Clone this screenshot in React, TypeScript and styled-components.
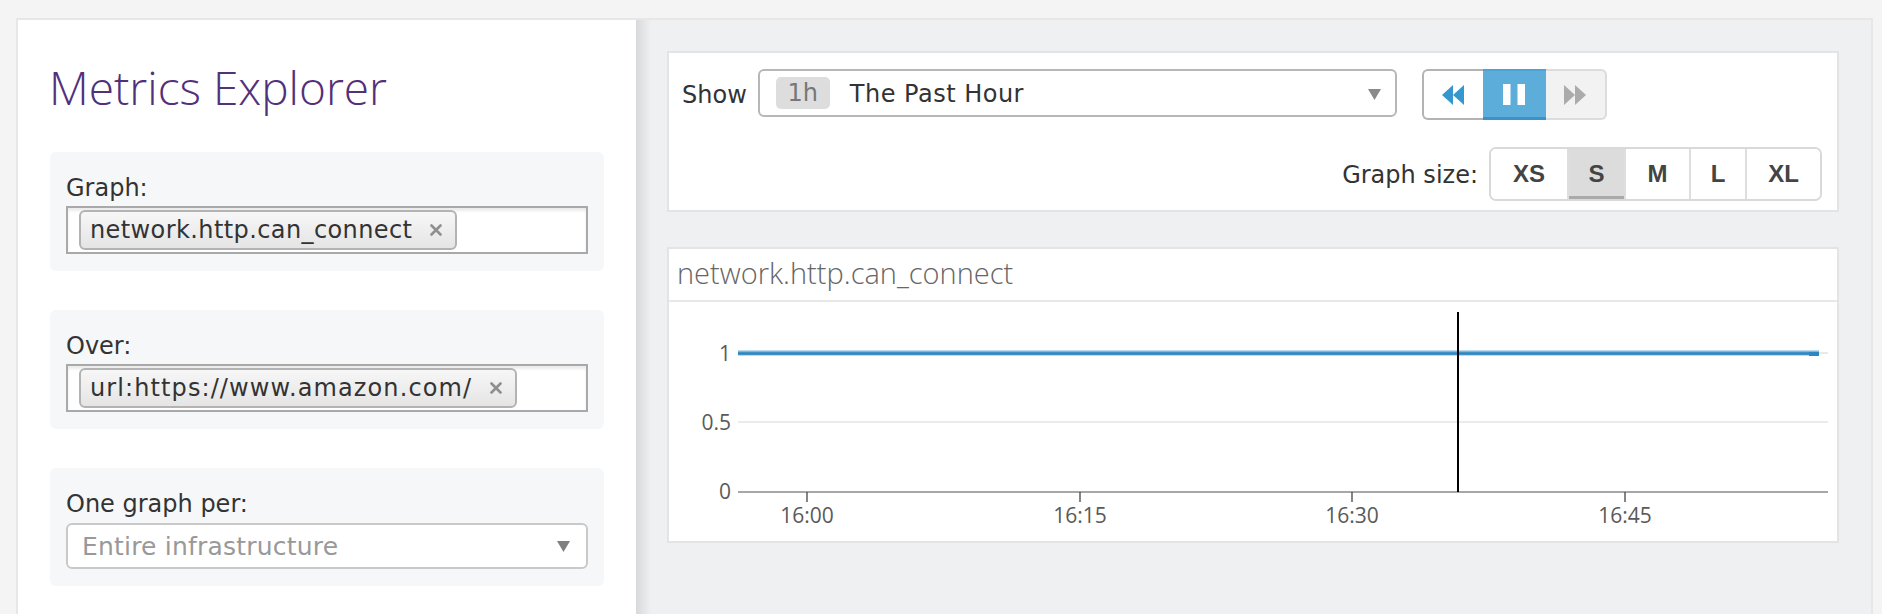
import React from 'react';
import styled, { createGlobalStyle } from 'styled-components';

const GlobalStyle = createGlobalStyle`
  html, body { margin: 0; padding: 0; height: 100%; }
  body {
    background: #f4f4f4;
    font-family: "DejaVu Sans", "Liberation Sans", sans-serif;
    overflow: hidden;
  }
  #root { height: 100%; }
  *, *::before, *::after { box-sizing: border-box; }
`;

const Page = styled.div`
  height: 100vh;
  padding: 18px 9px 0 16px;
`;

const Frame = styled.div`
  height: 100%;
  display: grid;
  grid-template-columns: 618px 1fr;
  border: 2px solid #e7e7e7;
  border-bottom: none;
`;

const Sidebar = styled.aside`
  background: #fff;
  padding: 0 32px;
`;

const Title = styled.h1`
  margin: 41px 0 39px -1px;
  font-family: "Open Sans", sans-serif;
  font-weight: 300;
  font-size: 46px;
  line-height: 52px;
  color: #52307a;
`;

const FieldBox = styled.div`
  background: #f6f7f8;
  border-radius: 6px;
  padding: 22px 16px 17px;
  & + & { margin-top: 39px; }
`;

const FieldLabel = styled.div<{ $gap: number }>`
  font-size: 24px;
  line-height: 28px;
  color: #333;
  margin-bottom: ${p => p.$gap}px;
`;

const TagInput = styled.div`
  height: 48px;
  background: #fff;
  border: 2px solid #a9a9a9;
  box-shadow: inset 0 3px 3px rgba(0, 0, 0, 0.08);
  display: flex;
  align-items: center;
  padding-left: 11px;
`;

const Tag = styled.span<{ $track: number }>`
  height: 40px;
  display: inline-flex;
  align-items: center;
  padding: 0 13px 0 9px;
  border: 2px solid #b3b3b3;
  border-radius: 6px;
  background: linear-gradient(#f7f7f7, #e5e5e5);
  font-size: 24px;
  letter-spacing: ${p => p.$track}px;
  color: #333;
  white-space: nowrap;
`;

const TagRemove = styled.svg`
  margin-left: 18px;
  flex: none;
`;

const Dropdown = styled.div`
  height: 46px;
  border: 2px solid #c9c9c9;
  border-radius: 6px;
  background: #fff;
  display: flex;
  align-items: center;
  justify-content: space-between;
  padding: 0 16px 0 14px;
  color: #999;
  font-size: 25px;
  letter-spacing: 0.2px;
`;

const Caret = styled.svg`
  flex: none;
`;

const Main = styled.main`
  background: linear-gradient(to right, #d8d9dc 0, #eff0f2 15px, #eff0f2 100%);
  padding: 31px 32px 0 31px;
`;

const Card = styled.section`
  background: #fff;
  border: 2px solid #e3e4e6;
`;

const Controls = styled(Card)`
  padding: 16px 15px 9px 13px;
  display: flex;
  flex-direction: column;
  gap: 27px;
`;

const ControlRow = styled.div<{ $end?: boolean }>`
  display: flex;
  align-items: ${p => (p.$end ? 'center' : 'flex-start')};
  justify-content: ${p => (p.$end ? 'flex-end' : 'flex-start')};
`;

const ControlLabel = styled.span<{ $gap: number }>`
  font-size: 24px;
  line-height: 48px;
  padding-top: 2px;
  color: #333;
  margin-right: ${p => p.$gap}px;
  white-space: nowrap;
`;

const TimeSelect = styled.div`
  width: 639px;
  height: 48px;
  border: 2px solid #b7b7b7;
  border-radius: 6px;
  display: flex;
  align-items: center;
  padding: 2px 14px 0 16px;
  font-size: 24px;
  color: #333;
`;

const Badge = styled.span`
  width: 54px;
  height: 32px;
  margin-top: -2px;
  border-radius: 5px;
  background: #dddddd;
  color: #777;
  display: flex;
  align-items: center;
  justify-content: center;
  margin-right: 20px;
`;

const TimeText = styled.span`
  flex: 1;
  letter-spacing: 0.5px;
`;

const Playback = styled.div`
  display: flex;
  height: 51px;
  margin-left: 25px;
`;

const PlayButton = styled.div<{ $kind: 'back' | 'pause' | 'fwd' }>`
  width: ${p => (p.$kind === 'pause' ? 63 : 61)}px;
  display: flex;
  align-items: center;
  justify-content: center;
  ${p =>
    p.$kind === 'back'
      ? `background:#fff;border:2px solid #b3b3b3;border-right:none;border-radius:6px 0 0 6px;`
      : p.$kind === 'pause'
      ? `background:#5daddb;border-top:2px solid #4fa2d5;border-bottom:3px solid #3a92ca;`
      : `background:#f2f2f2;border:2px solid #dcdcdc;border-left:none;border-radius:0 6px 6px 0;`}
`;

const SizeGroup = styled.div`
  display: flex;
  height: 54px;
  border: 2px solid #d9d9d9;
  border-radius: 7px;
  overflow: hidden;
  margin-left: 11px;
`;

const SizeButton = styled.div<{ $w: number; $active?: boolean }>`
  width: ${p => p.$w}px;
  display: flex;
  align-items: center;
  justify-content: center;
  font-family: "Liberation Sans", Arial, sans-serif;
  font-weight: 700;
  font-size: 24px;
  color: #444;
  background: ${p => (p.$active ? '#dcdcdc' : '#fff')};
  box-shadow: ${p => (p.$active ? 'inset 0 -3px 0 #aaaaaa' : 'none')};
  & + & { border-left: 2px solid #dedede; }
`;

const ChartCard = styled(Card)`
  margin-top: 35px;
`;

const ChartHeader = styled.header`
  height: 53px;
  border-bottom: 2px solid #e8e8e8;
  padding: 0 0 3px 8px;
  font-family: "Open Sans", sans-serif;
  font-weight: 300;
  font-size: 29px;
  line-height: 48px;
  color: #666;
`;

const ChartSvg = styled.svg`
  display: block;
  width: 100%;
  height: 239px;
`;

const XIcon = () => (
  <TagRemove width="12" height="12" viewBox="0 0 12 12">
    <path d="M1.5 1.5 L10.5 10.5 M10.5 1.5 L1.5 10.5" stroke="#8f8f8f" strokeWidth="2.6" strokeLinecap="round" />
  </TagRemove>
);

const DownCaret = ({ color }: { color: string }) => (
  <Caret width="13" height="12" viewBox="0 0 13 12">
    <polygon points="0,1 13,1 6.5,12" fill={color} />
  </Caret>
);

const sizes: { label: string; w: number; active?: boolean }[] = [
  { label: 'XS', w: 76 },
  { label: 'S', w: 57, active: true },
  { label: 'M', w: 65 },
  { label: 'L', w: 56 },
  { label: 'XL', w: 75 },
];

const ticks = [
  { x: 138, label: '16:00' },
  { x: 411, label: '16:15' },
  { x: 683, label: '16:30' },
  { x: 956, label: '16:45' },
];

const yLabels = [
  { y: 58.5, label: '1' },
  { y: 128, label: '0.5' },
  { y: 197, label: '0' },
];

export default function App() {
  return (
    <>
      <GlobalStyle />
      <Page>
        <Frame>
          <Sidebar>
            <Title>Metrics Explorer</Title>
            <FieldBox>
              <FieldLabel $gap={4}>Graph:</FieldLabel>
              <TagInput>
                <Tag $track={0.4}>
                  network.http.can_connect
                  <XIcon />
                </Tag>
              </TagInput>
            </FieldBox>
            <FieldBox>
              <FieldLabel $gap={4}>Over:</FieldLabel>
              <TagInput>
                <Tag $track={1.1}>
                  url:https://www.amazon.com/
                  <XIcon />
                </Tag>
              </TagInput>
            </FieldBox>
            <FieldBox>
              <FieldLabel $gap={5}>One graph per:</FieldLabel>
              <Dropdown>
                <span>Entire infrastructure</span>
                <DownCaret color="#808080" />
              </Dropdown>
            </FieldBox>
          </Sidebar>
          <Main>
            <Controls>
              <ControlRow>
                <ControlLabel $gap={11}>Show</ControlLabel>
                <TimeSelect>
                  <Badge>1h</Badge>
                  <TimeText>The Past Hour</TimeText>
                  <DownCaret color="#8a8a8a" />
                </TimeSelect>
                <Playback>
                  <PlayButton $kind="back">
                    <svg width="22" height="20" viewBox="0 0 22 20">
                      <polygon points="11,0 0,10 11,20" fill="#3597cd" />
                      <polygon points="22,0 11,10 22,20" fill="#3597cd" />
                    </svg>
                  </PlayButton>
                  <PlayButton $kind="pause">
                    <svg width="22" height="21" viewBox="0 0 22 21">
                      <rect x="0" y="0" width="7.5" height="21" fill="#fff" />
                      <rect x="14.5" y="0" width="7.5" height="21" fill="#fff" />
                    </svg>
                  </PlayButton>
                  <PlayButton $kind="fwd">
                    <svg width="22" height="20" viewBox="0 0 22 20">
                      <polygon points="0,0 11,10 0,20" fill="#ababab" />
                      <polygon points="11,0 22,10 11,20" fill="#ababab" />
                    </svg>
                  </PlayButton>
                </Playback>
              </ControlRow>
              <ControlRow $end>
                <ControlLabel $gap={0}>Graph size:</ControlLabel>
                <SizeGroup>
                  {sizes.map(s => (
                    <SizeButton key={s.label} $w={s.w} $active={s.active}>
                      {s.label}
                    </SizeButton>
                  ))}
                </SizeGroup>
              </ControlRow>
            </Controls>
            <ChartCard>
              <ChartHeader>network.http.can_connect</ChartHeader>
              <ChartSvg viewBox="0 0 1168 239" preserveAspectRatio="none">
                <line x1="69" y1="51" x2="1159" y2="51" stroke="#e2e2e2" strokeWidth="1.5" />
                <line x1="69" y1="120" x2="1159" y2="120" stroke="#e4e4e4" strokeWidth="1.5" />
                <line x1="69" y1="190" x2="1159" y2="190" stroke="#8a8a8a" strokeWidth="1.5" />
                {ticks.map(t => (
                  <g key={t.label}>
                    <line x1={t.x} y1="190" x2={t.x} y2="200" stroke="#444" strokeWidth="1.3" />
                    <text
                      x={t.x}
                      y="220.5"
                      textAnchor="middle"
                      fontFamily="Open Sans, sans-serif"
                      fontSize="21"
                      fill="#5a5a5a"
                    >
                      {t.label}
                    </text>
                  </g>
                ))}
                {yLabels.map(l => (
                  <text
                    key={l.label}
                    x="62"
                    y={l.y}
                    textAnchor="end"
                    fontFamily="Open Sans, sans-serif"
                    fontSize="21"
                    fill="#5a5a5a"
                  >
                    {l.label}
                  </text>
                ))}
                <line x1="69" y1="51" x2="1150" y2="51" stroke="#7db8de" strokeWidth="5" />
                <line x1="69" y1="51.5" x2="1150" y2="51.5" stroke="#2c86c1" strokeWidth="2.5" />
                <rect x="1140" y="50" width="10" height="4" fill="#2c86c1" />
                <line x1="789" y1="10" x2="789" y2="190" stroke="#000" strokeWidth="2" />
              </ChartSvg>
            </ChartCard>
          </Main>
        </Frame>
      </Page>
    </>
  );
}
